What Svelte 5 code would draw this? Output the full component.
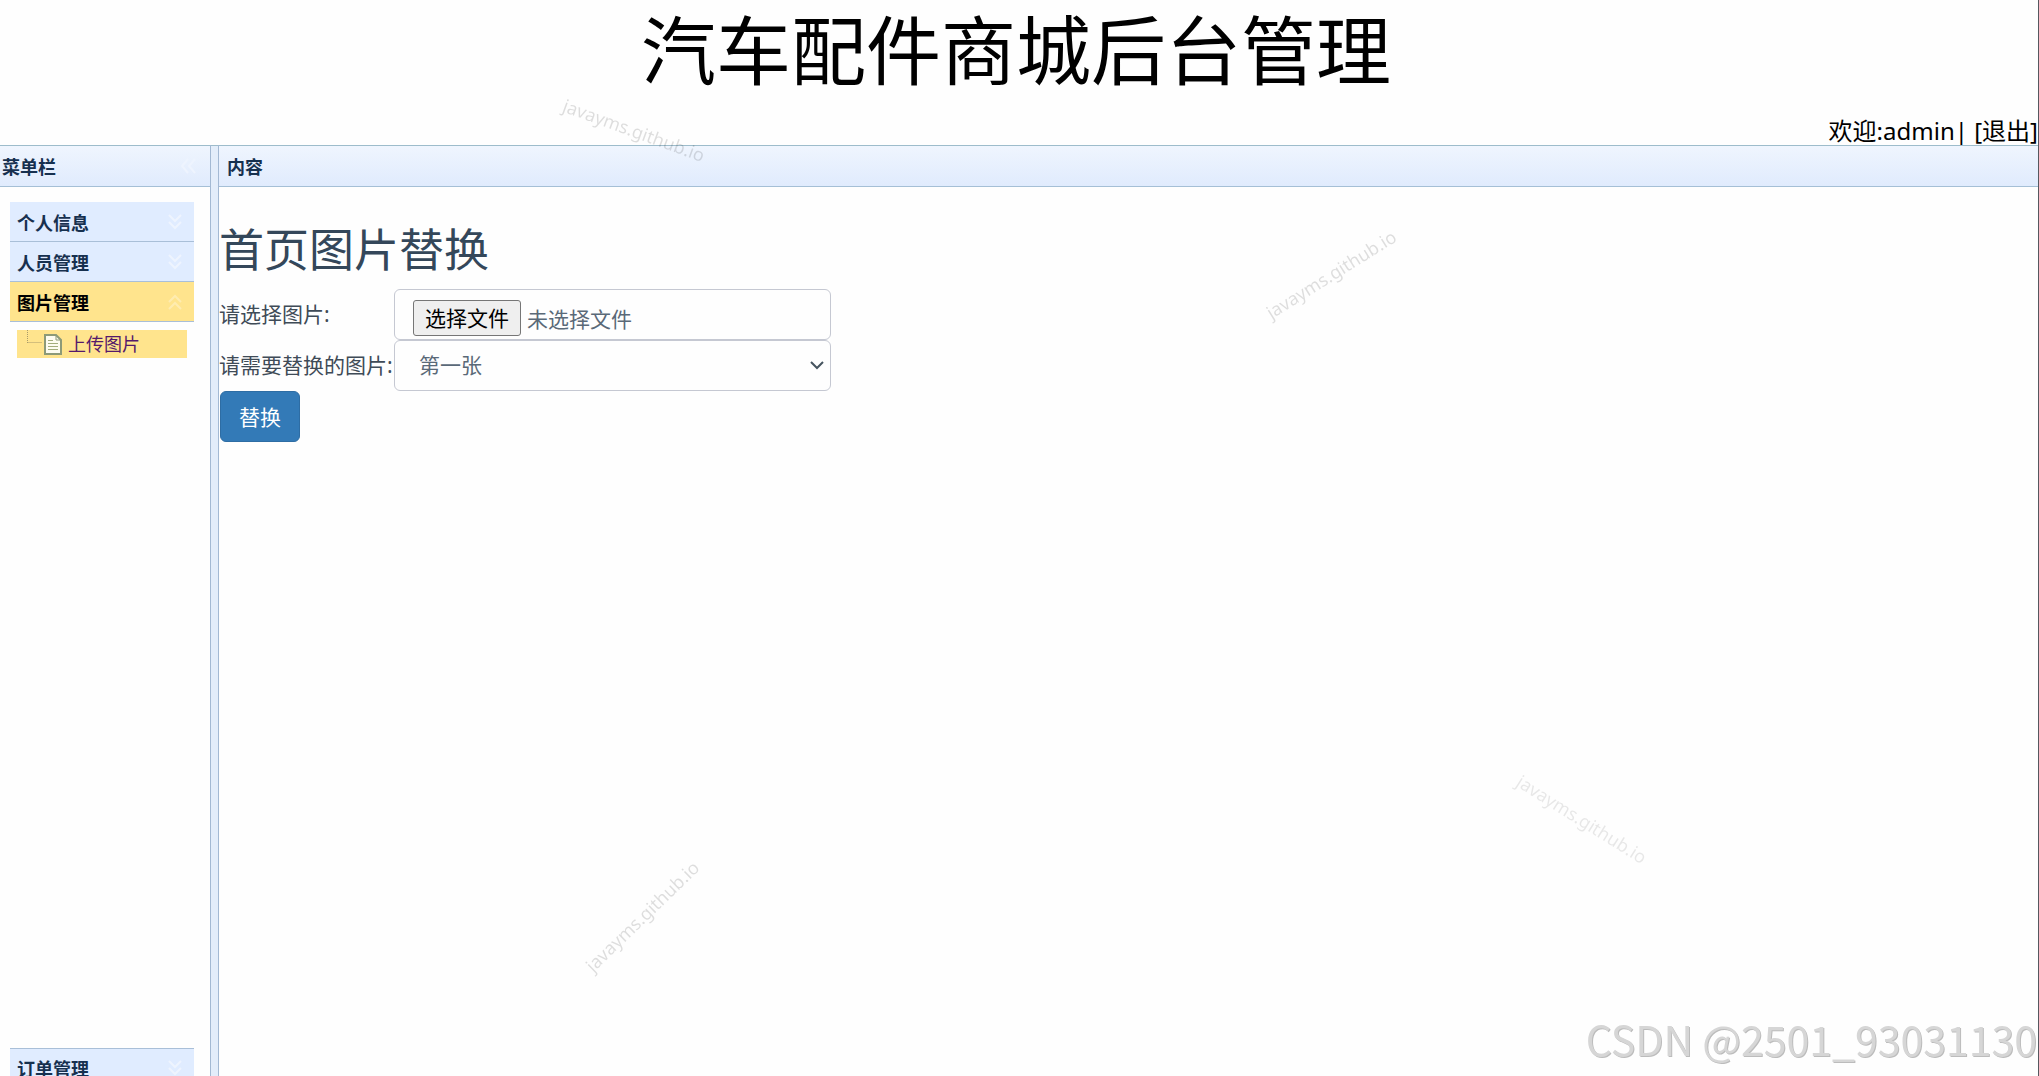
<script>
  let active = $state("图片管理");
  let fileName = $state("未选择文件");
  let position = $state("第一张");
  let fileInput;

  const topMenus = ["个人信息", "人员管理", "图片管理"];
  const bottomMenus = ["订单管理"];
  const positions = ["第一张", "第二张", "第三张"];

  function handleFile(e) {
    const file = e.target.files[0];
    fileName = file ? file.name : "未选择文件";
  }

  function handleSubmit(e) {
    e.preventDefault();
  }
</script>

{#snippet menuHeader(name)}
  <button class="menu-header" class:selected={active === name} onclick={() => (active = name)}>
    <span>{name}</span>
    <svg class="arrows" class:up={active === name} viewBox="0 0 16 16">
      <path d="M2 1l6 6 6-6M2 8l6 6 6-6" />
    </svg>
  </button>
{/snippet}

<div class="page">
  <header class="top">
    <h1>汽车配件商城后台管理</h1>
    <div class="user">欢迎:admin| <a href="#logout">[退出]</a></div>
  </header>

  <div class="layout">
    <aside class="west">
      <div class="panel-header">
        <span>菜单栏</span>
        <button class="collapse" aria-label="收起">
          <svg class="arrows" viewBox="0 0 16 16">
            <path d="M8 1L2 8l6 7M15 1L9 8l6 7" />
          </svg>
        </button>
      </div>
      <nav class="accordion">
        {#each topMenus as name}
          {@render menuHeader(name)}
        {/each}
        <div class="tree">
          <a class="node" href="#upload">
            <svg class="branch" viewBox="0 0 16 28">
              <path d="M1.5 0v13M1.5 12.5H16" />
            </svg>
            <svg class="file" viewBox="0 0 18 21">
              <path class="sheet" d="M1 1h11l5 5v14H1z" />
              <path class="fold" d="M12 1v5h5" />
              <path class="lines" d="M4 6.5h5M4 9.5h10M4 12.5h10M4 15.5h10" />
            </svg>
            <span>上传图片</span>
          </a>
        </div>
        {#each bottomMenus as name}
          {@render menuHeader(name)}
        {/each}
      </nav>
    </aside>

    <div class="splitter"></div>

    <main class="center">
      <div class="panel-header">
        <span>内容</span>
      </div>
      <form class="body" onsubmit={handleSubmit}>
        <h2>首页图片替换</h2>
        <div class="row">
          <label for="picture">请选择图片:</label>
          <div class="control file-control">
            <input id="picture" type="file" bind:this={fileInput} onchange={handleFile} />
            <button type="button" class="choose" onclick={() => fileInput.click()}>选择文件</button>
            <span>{fileName}</span>
          </div>
        </div>
        <div class="row">
          <label for="position">请需要替换的图片:</label>
          <div class="select-wrap">
            <select id="position" class="control" bind:value={position}>
              {#each positions as item}
                <option>{item}</option>
              {/each}
            </select>
            <svg class="caret" viewBox="0 0 14 10">
              <path d="M1 2l6 6 6-6" />
            </svg>
          </div>
        </div>
        <button type="submit" class="submit">替换</button>
      </form>
    </main>
  </div>
</div>

<div class="marks">
  <span class="mark m1">javayms.github.io</span>
  <span class="mark m2">javayms.github.io</span>
  <span class="mark m3">javayms.github.io</span>
  <span class="mark m4">javayms.github.io</span>
  <span class="csdn">CSDN @2501_93031130</span>
</div>

<style>
  :global(body) {
    overflow: hidden;
    background: #fefefe;
    font-family: "Noto Sans", "Noto Sans CJK SC", sans-serif;
  }

  * {
    box-sizing: border-box;
  }

  button,
  select {
    font-family: inherit;
    cursor: pointer;
  }

  /* the last menu header runs past the bottom of the window */
  .page {
    display: flex;
    flex-direction: column;
    height: calc(100vh + 12px);
    border-right: 1px solid #55585f;
  }

  .top {
    color: #000;
  }

  .top h1 {
    margin: 0;
    height: 117px;
    padding-right: 6px;
    font-size: 75px;
    font-weight: 400;
    line-height: 100px;
    text-align: center;
  }

  .user {
    font-size: 24px;
    line-height: 28px;
    text-align: right;
  }

  .user a {
    color: inherit;
    text-decoration: none;
  }

  .layout {
    flex: 1;
    display: flex;
    min-height: 0;
  }

  .west {
    display: flex;
    flex-direction: column;
    width: 211px;
    border-right: 1px solid #a3b9d3;
  }

  .splitter {
    width: 7px;
    border-top: 1px solid #9dbccb;
    background: #e3edfa;
  }

  .center {
    flex: 1;
    border-left: 1px solid #a3b9d3;
  }

  .panel-header {
    display: flex;
    align-items: center;
    justify-content: space-between;
    height: 42px;
    padding: 0 14px 0 2px;
    border-top: 1px solid #9dbccb;
    border-bottom: 1px solid #a5bfd6;
    background: linear-gradient(#eff5fe, #e0ebfd);
    color: #16304f;
    font-size: 18px;
    font-weight: 700;
  }

  .center .panel-header {
    padding-left: 8px;
  }

  .collapse {
    display: flex;
    padding: 0;
    border: none;
    background: none;
  }

  .arrows {
    width: 16px;
    height: 16px;
    fill: none;
    stroke: #eef4fe;
    stroke-width: 2;
  }

  .arrows.up {
    transform: rotate(180deg);
    stroke: #ffecb0;
  }

  .accordion {
    flex: 1;
    display: flex;
    flex-direction: column;
    padding: 15px 16px 0 10px;
  }

  .menu-header {
    display: flex;
    flex: none;
    align-items: center;
    justify-content: space-between;
    height: 40px;
    padding: 0 11px 0 7px;
    border: none;
    border-bottom: 1px solid #a9bfd8;
    background: #e0ecff;
    color: #16304f;
    font-size: 18px;
    font-weight: 700;
  }

  .menu-header.selected {
    background: #ffe48d;
    color: #000;
  }

  .tree {
    flex: 1;
    padding: 8px 7px;
  }

  .tree + .menu-header {
    border-top: 1px solid #a9bfd8;
  }

  .node {
    display: flex;
    align-items: center;
    height: 28px;
    padding-left: 9px;
    background: #ffe48d;
    color: #551a6b;
    font-size: 18px;
    line-height: 26px;
    text-decoration: none;
  }

  .branch {
    width: 16px;
    height: 28px;
    fill: none;
    stroke: #a89a6a;
    stroke-dasharray: 1 1;
  }

  .file {
    width: 18px;
    height: 21px;
    margin: 0 6px 0 2px;
  }

  .sheet {
    fill: #fdfcf0;
    stroke: #8d9a78;
    stroke-width: 2;
  }

  .fold {
    fill: none;
    stroke: #8d9a78;
  }

  .lines {
    fill: none;
    stroke: #a3ad7c;
  }

  .body {
    padding: 36px 0 0;
    color: #3f4b57;
    font-size: 21px;
  }

  .body h2 {
    margin: 0;
    padding-bottom: 12px;
    color: #34475a;
    font-size: 45px;
    font-weight: 400;
    line-height: 54px;
  }

  .row {
    display: flex;
    align-items: center;
    height: 51px;
  }

  .row label {
    width: 175px;
    padding-bottom: 3px;
    white-space: nowrap;
  }

  .control {
    width: 437px;
    height: 51px;
    border: 1px solid #c5c8d2;
    border-radius: 6px;
    background: #fefefe;
    color: #5a6978;
    font-size: 21px;
  }

  .file-control {
    display: flex;
    align-items: center;
    gap: 6px;
    padding: 6px 18px 0;
  }

  .file-control input {
    position: absolute;
    width: 1px;
    height: 1px;
    opacity: 0;
  }

  .choose {
    height: 36px;
    padding: 0 11px;
    border: 1px solid #767676;
    border-radius: 3px;
    background: #efefef;
    color: #000;
    font-size: 21px;
    line-height: 34px;
  }

  .select-wrap {
    position: relative;
  }

  select.control {
    display: block;
    padding: 0 24px 2px;
    appearance: none;
  }

  .caret {
    position: absolute;
    right: 7px;
    top: 20px;
    width: 14px;
    height: 10px;
    fill: none;
    stroke: #46545f;
    stroke-width: 2;
    pointer-events: none;
  }

  .submit {
    display: block;
    height: 51px;
    margin-left: 1px;
    padding: 0 18px 2px;
    border: 1px solid #2e6da4;
    border-radius: 6px;
    background: #337ab7;
    color: #fff;
    font-size: 21px;
  }

  .marks {
    position: fixed;
    inset: 0;
    pointer-events: none;
  }

  .mark {
    position: absolute;
    color: rgba(0, 0, 0, 0.13);
    font-size: 18px;
    line-height: 26px;
    translate: -50% -50%;
  }

  .m1 {
    left: 31.1%;
    top: 12.1%;
    rotate: 20deg;
  }

  .m2 {
    left: 65.3%;
    top: 25.5%;
    rotate: -32deg;
  }

  .m3 {
    left: 31.5%;
    top: 85.1%;
    rotate: -44deg;
  }

  .m4 {
    left: 77.6%;
    top: 76.1%;
    color: rgba(0, 0, 0, 0.09);
    rotate: 32deg;
  }

  .csdn {
    position: absolute;
    right: 2px;
    bottom: 8px;
    color: #d6d6d6;
    font-family: "Noto Sans CJK SC", sans-serif;
    font-size: 41px;
    line-height: 60px;
    text-shadow: 1px 1px 0 #bcbcbc;
    white-space: nowrap;
  }
</style>
